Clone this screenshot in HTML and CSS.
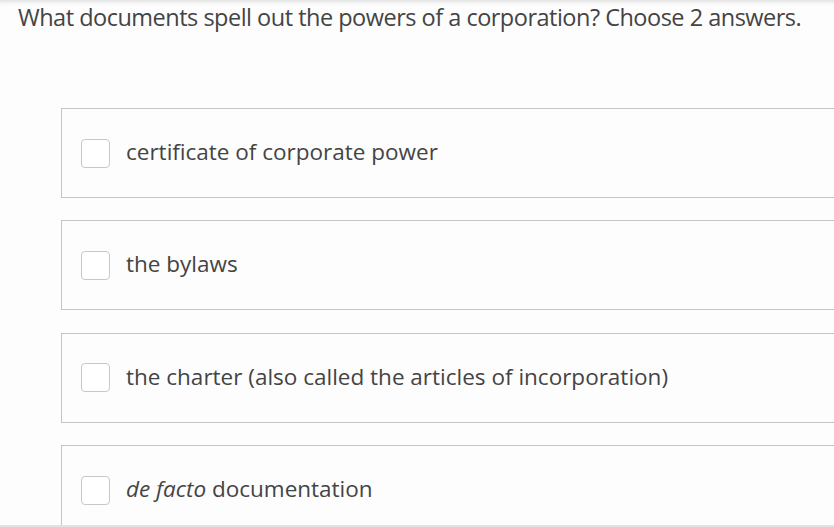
FILE: index.html
```html
<!DOCTYPE html>
<html lang="en">
<head>
<meta charset="UTF-8">
<meta name="viewport" content="width=device-width, initial-scale=1.0">
<title>Question</title>
<link rel="stylesheet" href="styles.css">
</head>
<body>
<div class="page">
<h2 class="question">What documents spell out the powers of a corporation? Choose 2 answers.</h2>
<div class="answers">
    <label class="answer"><span class="box"></span><span class="text">certificate of corporate power</span></label>
    <label class="answer"><span class="box"></span><span class="text">the bylaws</span></label>
    <label class="answer"><span class="box"></span><span class="text">the charter (also called the articles of incorporation)</span></label>
    <label class="answer"><span class="box"></span><span class="text"><em>de facto</em> documentation</span></label>
</div>
</div>
</body>
</html>
```

FILE: styles.css
```css
html, body {
    margin: 0;
    padding: 0;
    height: 100%;
    overflow: hidden;
}
body {
    font-family: "Open Sans", Arial, sans-serif;
    background-color: #fdfdfd;
    color: #444;
}
.page {
    height: 525px;
    border-bottom: 2px solid #e2e2e2;
    box-shadow: inset 0 5px 4px -3px rgba(0, 0, 0, 0.12);
    overflow: hidden;
}
.question {
    margin: 0;
    padding: 1px 0 0 18px;
    font-size: 23.5px;
    font-weight: 400;
    letter-spacing: -0.5px;
    line-height: 32px;
    color: #444;
    white-space: nowrap;
}
.answers {
    display: flex;
    flex-direction: column;
    gap: 22px;
    padding: 75px 0 0 61px;
}
.answer {
    display: flex;
    align-items: center;
    gap: 16px;
    height: 88px;
    padding-left: 19px;
    border: 1px solid #c4c4c4;
    border-right: none;
    background-color: #fdfdfd;
}
.answer + .answer {
    margin-top: 0.4px;
}
.box {
    flex: none;
    width: 27px;
    height: 27px;
    border: 1px solid #c8c8c8;
    border-radius: 4px;
    background-color: #fff;
}
.text {
    font-size: 22.5px;
    line-height: 28px;
    padding-bottom: 2px;
    color: #444;
}
```
